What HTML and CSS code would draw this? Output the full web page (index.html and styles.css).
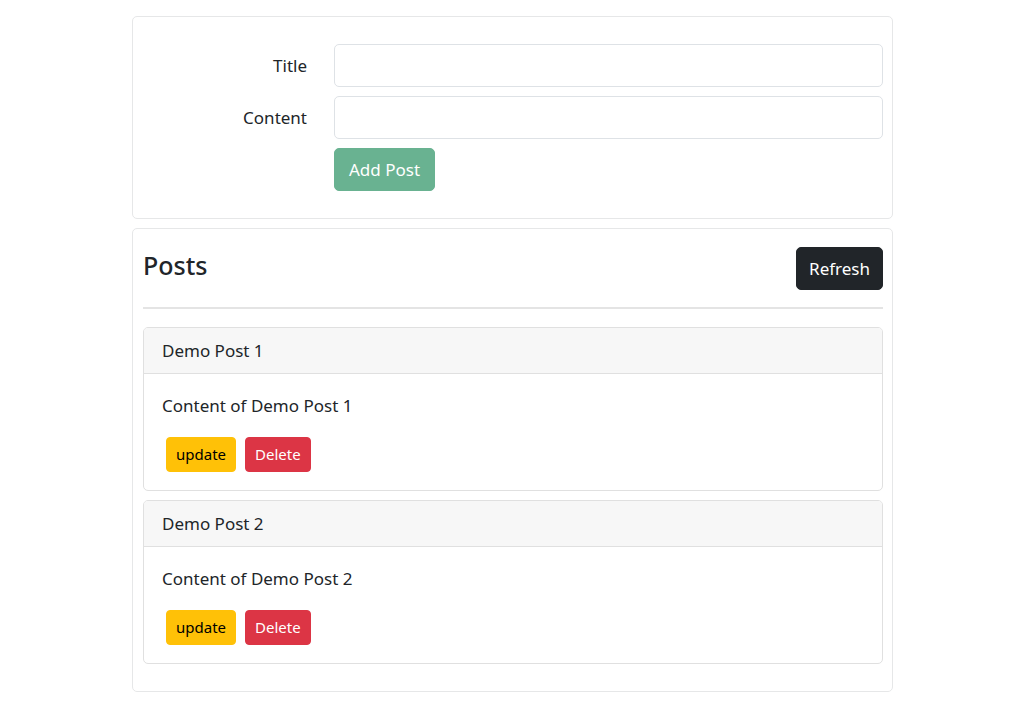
FILE: index.html
```html
<!DOCTYPE html>
<html lang="en">
<head>
<meta charset="utf-8">
<title>Posts</title>
<link rel="stylesheet" href="styles.css">
</head>
<body>
<div class="page">
  <section class="card form-card">
    <form class="post-form">
      <label class="form-label" for="title">Title</label>
      <input class="form-control" id="title" type="text">
      <label class="form-label" for="content">Content</label>
      <input class="form-control" id="content" type="text">
      <span></span>
      <div><button type="button" class="btn btn-success" disabled>Add Post</button></div>
    </form>
  </section>

  <section class="card posts-card">
    <div class="posts-head">
      <h3 class="posts-title">Posts</h3>
      <button type="button" class="btn btn-dark">Refresh</button>
    </div>
    <hr class="divider">

    <article class="post">
      <div class="post-header">Demo Post 1</div>
      <div class="post-body">
        <p class="post-text">Content of Demo Post 1</p>
        <div class="post-actions">
          <button type="button" class="btn-sm btn-warning">update</button>
          <button type="button" class="btn-sm btn-danger">Delete</button>
        </div>
      </div>
    </article>

    <article class="post">
      <div class="post-header">Demo Post 2</div>
      <div class="post-body">
        <p class="post-text">Content of Demo Post 2</p>
        <div class="post-actions">
          <button type="button" class="btn-sm btn-warning">update</button>
          <button type="button" class="btn-sm btn-danger">Delete</button>
        </div>
      </div>
    </article>
  </section>
</div>
</body>
</html>
```

FILE: styles.css
```css
* { box-sizing: border-box; }

html, body {
  margin: 0;
  padding: 0;
  background: #fff;
}

body {
  font-family: "Noto Sans", "Open Sans", sans-serif;
  font-size: 17px;
  line-height: 27px;
  color: #212529;
}

.page {
  width: 761px;
  margin-left: 132px;
  padding-top: 16px;
}

.card {
  border: 1px solid #e6e7e8;
  border-radius: 5px;
  background: #fff;
}

.form-card {
  padding: 27px 9px 27px 10px;
  margin-bottom: 9px;
}

.post-form {
  display: grid;
  grid-template-columns: 164px 1fr;
  column-gap: 27px;
  row-gap: 9px;
  align-items: center;
}

.form-label {
  text-align: right;
}

.form-control {
  display: block;
  width: 100%;
  height: 43px;
  padding: 6px 12px;
  font: inherit;
  color: #212529;
  border: 1px solid #dee2e6;
  border-radius: 5px;
  background: #fff;
}

.btn {
  display: inline-block;
  height: 43px;
  padding: 0 14px;
  font: inherit;
  line-height: 41px;
  border: 1px solid transparent;
  border-radius: 5px;
  cursor: pointer;
}

.btn-success {
  background: #69b291;
  border-color: #69b291;
  color: #fff;
}

.btn-dark {
  background: #212529;
  border-color: #212529;
  color: #fff;
  padding: 0 12px;
}

.posts-card {
  padding: 18px 9px 18px 10px;
}

.posts-head {
  display: flex;
  justify-content: space-between;
  align-items: center;
}

.posts-title {
  margin: 0 0 8px;
  font-size: 25px;
  font-weight: 500;
  line-height: 1.2;
}

.divider {
  margin: 17px 0 18px;
  border: 0;
  border-top: 2px solid #e4e4e4;
}

.post {
  border: 1px solid #e0e0e0;
  border-radius: 5px;
  margin-bottom: 9px;
  overflow: hidden;
}

.post-header {
  padding: 9px 18px;
  background: #f7f7f7;
  border-bottom: 1px solid #e0e0e0;
}

.post-body {
  padding: 18px;
}

.post-text {
  margin: 0 0 18px;
}

.post-actions {
  display: flex;
  gap: 9px;
  padding-left: 4px;
}

.btn-sm {
  height: 35px;
  padding: 0 9px;
  font: inherit;
  font-size: 15px;
  line-height: 33px;
  border: 1px solid transparent;
  border-radius: 4px;
  cursor: pointer;
}

.btn-warning {
  background: #ffc107;
  border-color: #ffc107;
  color: #000;
}

.btn-danger {
  background: #dc3545;
  border-color: #dc3545;
  color: #fff;
}
```
